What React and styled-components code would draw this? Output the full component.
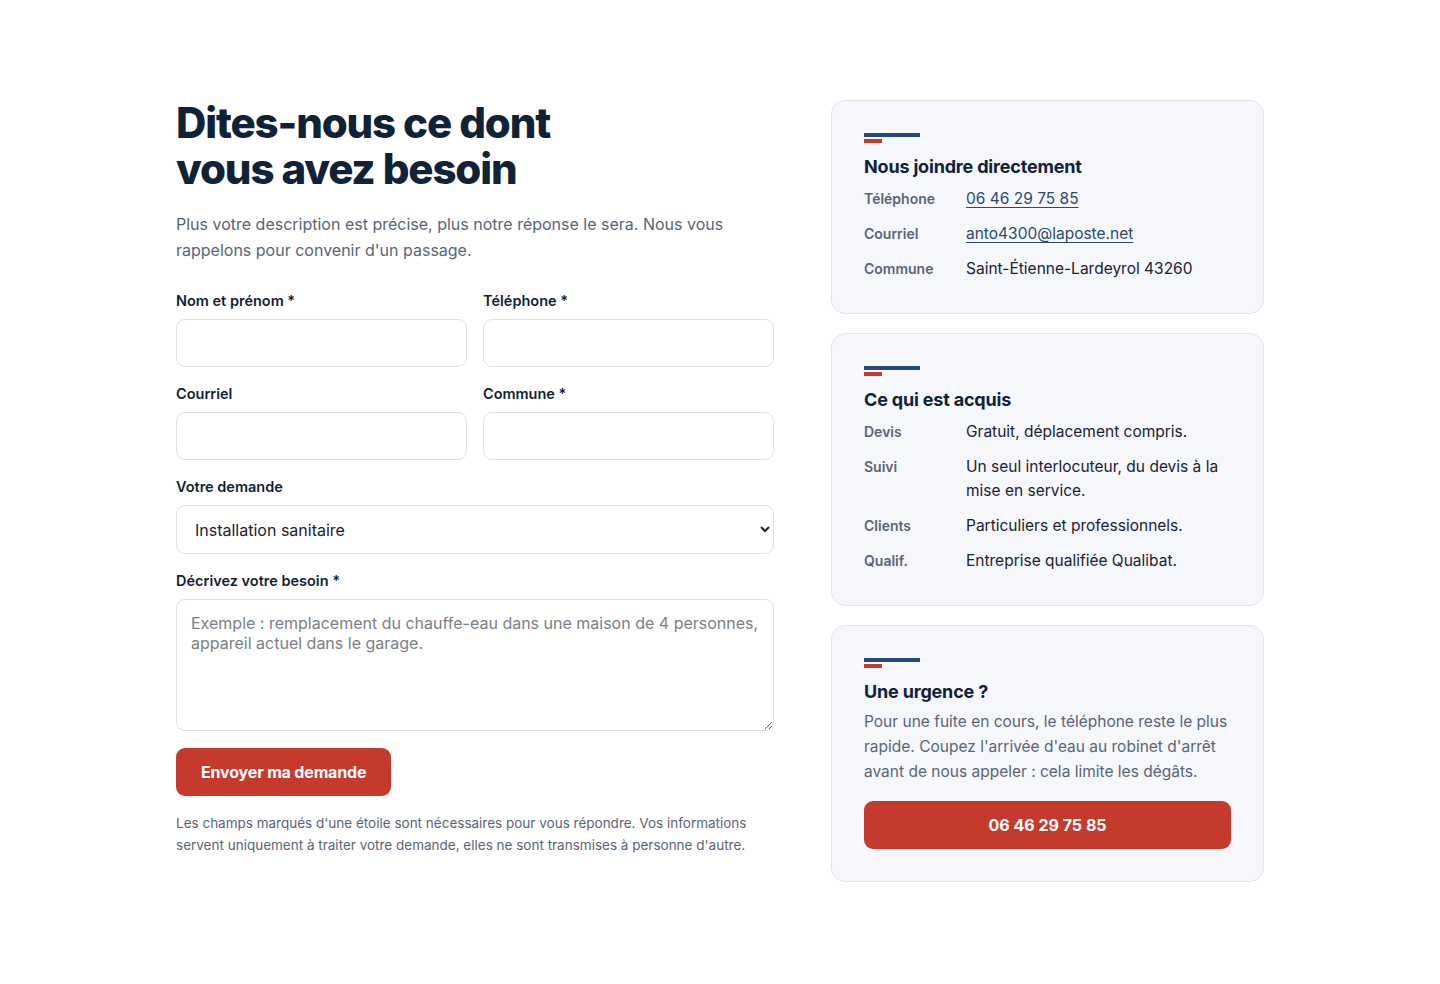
import styled, { createGlobalStyle } from "styled-components";

const Global = createGlobalStyle`
  * { box-sizing: border-box; }
  body {
    margin: 0;
    background: #ffffff;
    font-family: Inter, "Noto Sans", sans-serif;
    color: #1a2233;
  }
`;

const Section = styled.section`
  padding: 100px 0 80px;
  display: flex;
  justify-content: center;
`;

const Grid = styled.div`
  width: 1088px;
  display: grid;
  grid-template-columns: 598px 433px;
  column-gap: 57px;
  align-items: start;
`;

const Left = styled.div`
  display: flex;
  flex-direction: column;
`;

const Heading = styled.h2`
  margin: 0;
  font-size: 42px;
  line-height: 46px;
  font-weight: 800;
  letter-spacing: -0.027em;
  color: #0f2238;
`;

const Lead = styled.p`
  margin: 19px 0 28px;
  font-size: 16px;
  line-height: 26px;
  color: #5a6478;
  max-width: 560px;
`;

const Form = styled.form`
  display: flex;
  flex-direction: column;
  gap: 17px;
`;

const Row = styled.div`
  display: grid;
  grid-template-columns: 1fr 1fr;
  gap: 16px;
`;

const Field = styled.label`
  display: flex;
  flex-direction: column;
  gap: 8px;
`;

const Label = styled.span`
  font-size: 14.5px;
  line-height: 20px;
  font-weight: 600;
  color: #0f1f33;
`;

const Input = styled.input`
  height: 48px;
  border: 1px solid #dde1e7;
  border-radius: 9px;
  background: #fff;
  padding: 0 16px;
  font: inherit;
  font-size: 16px;
`;

const Select = styled.select`
  height: 49px;
  border: 1px solid #dde1e7;
  border-radius: 9px;
  background: #fff;
  padding: 0 14px;
  font-family: Inter, sans-serif;
  font-size: 16px;
  color: #1a2233;
`;

const Textarea = styled.textarea`
  height: 132px;
  border: 1px solid #dde1e7;
  border-radius: 9px;
  background: #fff;
  padding: 13px 14px;
  font-family: Inter, sans-serif;
  font-size: 16px;
  line-height: 20px;
  color: #1a2233;
  &::placeholder {
    color: #7b7f86;
  }
`;

const Submit = styled.button`
  align-self: flex-start;
  height: 48px;
  padding: 0 25px;
  border: none;
  border-radius: 9px;
  background: #c63a2e;
  color: #fff;
  font-family: Inter, sans-serif;
  font-size: 16px;
  font-weight: 700;
  letter-spacing: -0.01em;
`;

const Note = styled.p`
  margin: -1px 0 0;
  font-size: 13.5px;
  line-height: 22px;
  color: #5a6478;
`;

const Aside = styled.aside`
  display: flex;
  flex-direction: column;
  gap: 19px;
`;

const Card = styled.div`
  background: #f5f7fa;
  border: 1px solid #e2e6ec;
  border-radius: 14px;
  padding: 32px;
`;

const Stripes = styled.div`
  display: flex;
  flex-direction: column;
  gap: 2px;
  margin-bottom: 12px;
  &::before,
  &::after {
    content: "";
    display: block;
    height: 4px;
  }
  &::before {
    width: 56px;
    background: #234a78;
  }
  &::after {
    width: 18px;
    background: #c63a2e;
  }
`;

const CardTitle = styled.h3`
  margin: 0 0 ${(p) => (p.$tight ? "5px" : "8px")};
  font-size: 18px;
  line-height: 24px;
  font-weight: 700;
  letter-spacing: -0.01em;
  color: #0f2238;
`;

const List = styled.dl`
  margin: 0;
  display: grid;
  grid-template-columns: 102px 1fr;
  row-gap: 11px;
`;

const Term = styled.dt`
  font-size: 14px;
  line-height: 24px;
  font-weight: 600;
  color: #5b6476;
`;

const Desc = styled.dd`
  margin: 0;
  font-size: 15.5px;
  line-height: 24px;
  color: #1a2233;
`;

const Link = styled.a`
  color: #2b4a70;
  text-decoration: underline;
  text-underline-offset: 3px;
  text-decoration-thickness: 1px;
`;

const Text = styled.p`
  margin: 0 0 17px;
  font-size: 15.5px;
  line-height: 25px;
  color: #5a6478;
`;

const CallButton = styled.a`
  display: flex;
  align-items: center;
  justify-content: center;
  height: 48px;
  border-radius: 9px;
  background: #c63a2e;
  color: #fff;
  font-size: 16px;
  font-weight: 700;
  text-decoration: none;
`;

export default function App() {
  return (
    <>
      <Global />
      <Section>
        <Grid>
          <Left>
            <Heading>
              Dites-nous ce dont
              <br />
              vous avez besoin
            </Heading>
            <Lead>
              Plus votre description est précise, plus notre réponse le sera.
              Nous vous rappelons pour convenir d'un passage.
            </Lead>
            <Form onSubmit={(e) => e.preventDefault()}>
              <Row>
                <Field>
                  <Label>Nom et prénom *</Label>
                  <Input type="text" />
                </Field>
                <Field>
                  <Label>Téléphone *</Label>
                  <Input type="tel" />
                </Field>
              </Row>
              <Row>
                <Field>
                  <Label>Courriel</Label>
                  <Input type="email" />
                </Field>
                <Field>
                  <Label>Commune *</Label>
                  <Input type="text" />
                </Field>
              </Row>
              <Field>
                <Label>Votre demande</Label>
                <Select defaultValue="sanitaire">
                  <option value="sanitaire">Installation sanitaire</option>
                  <option value="chauffage">Chauffage</option>
                  <option value="depannage">Dépannage</option>
                </Select>
              </Field>
              <Field>
                <Label>Décrivez votre besoin *</Label>
                <Textarea placeholder="Exemple : remplacement du chauffe-eau dans une maison de 4 personnes, appareil actuel dans le garage." />
              </Field>
              <Submit type="submit">Envoyer ma demande</Submit>
              <Note>
                Les champs marqués d'une étoile sont nécessaires pour vous
                répondre. Vos informations servent uniquement à traiter votre
                demande, elles ne sont transmises à personne d'autre.
              </Note>
            </Form>
          </Left>
          <Aside>
            <Card>
              <Stripes />
              <CardTitle>Nous joindre directement</CardTitle>
              <List>
                <Term>Téléphone</Term>
                <Desc>
                  <Link href="#">06 46 29 75 85</Link>
                </Desc>
                <Term>Courriel</Term>
                <Desc>
                  <Link href="#">anto4300@laposte.net</Link>
                </Desc>
                <Term>Commune</Term>
                <Desc>Saint-Étienne-Lardeyrol 43260</Desc>
              </List>
            </Card>
            <Card>
              <Stripes />
              <CardTitle>Ce qui est acquis</CardTitle>
              <List>
                <Term>Devis</Term>
                <Desc>Gratuit, déplacement compris.</Desc>
                <Term>Suivi</Term>
                <Desc>Un seul interlocuteur, du devis à la mise en service.</Desc>
                <Term>Clients</Term>
                <Desc>Particuliers et professionnels.</Desc>
                <Term>Qualif.</Term>
                <Desc>Entreprise qualifiée Qualibat.</Desc>
              </List>
            </Card>
            <Card>
              <Stripes />
              <CardTitle $tight>Une urgence ?</CardTitle>
              <Text>
                Pour une fuite en cours, le téléphone reste le plus rapide.
                Coupez l'arrivée d'eau au robinet d'arrêt avant de nous appeler
                : cela limite les dégâts.
              </Text>
              <CallButton href="#">06 46 29 75 85</CallButton>
            </Card>
          </Aside>
        </Grid>
      </Section>
    </>
  );
}
